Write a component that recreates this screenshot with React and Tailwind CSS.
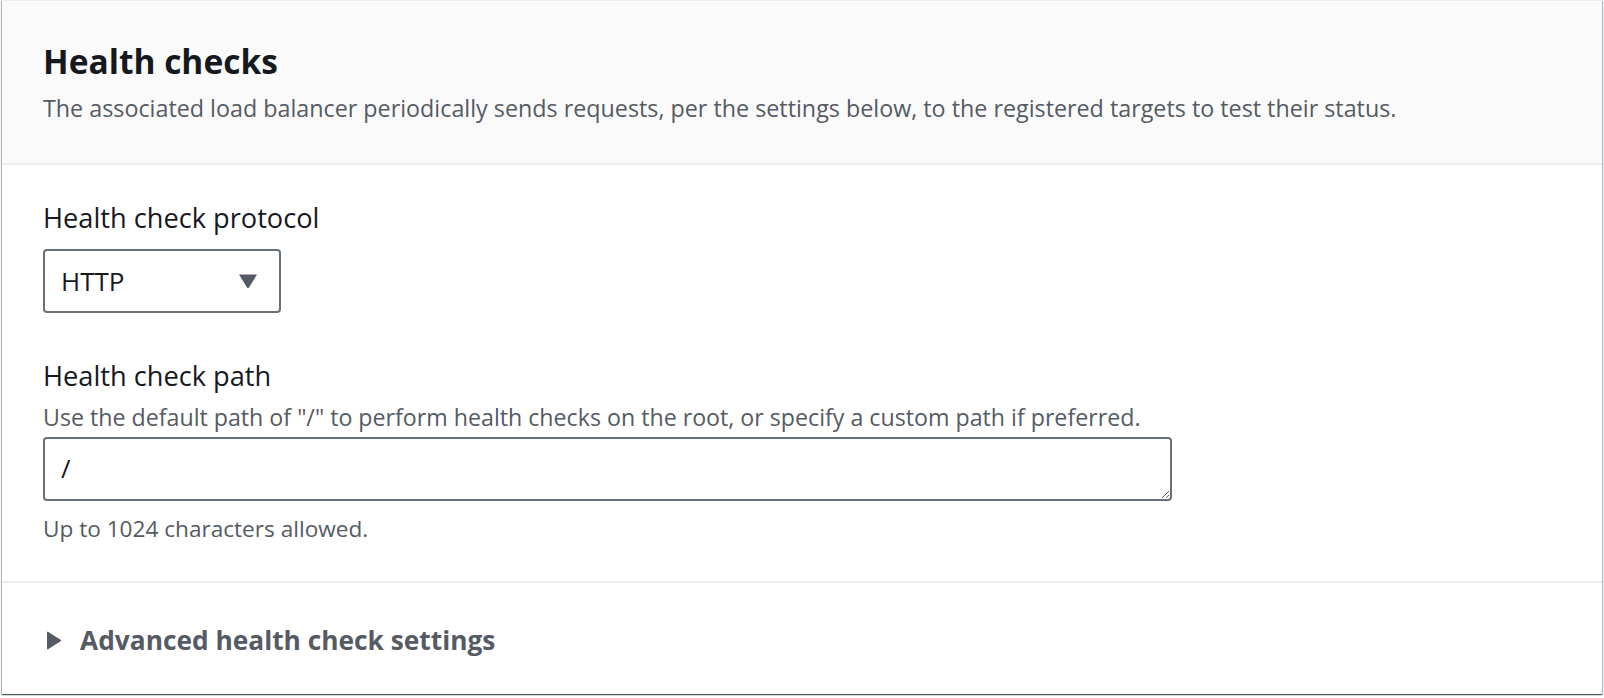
import React from 'react';

function Caret() {
    return (<svg width="20" height="16" viewBox="0 0 20 16" className="shrink-0">
            <path d="M1 1.5 L19 1.5 L11 14.5 Q10 15.5 9 14.5 Z" fill="#545b64"/>
        </svg>);
}

function RightCaret() {
    return (<svg width="16" height="19" viewBox="0 0 16 19" className="shrink-0">
            <path d="M1.5 1 L15 9.5 L1.5 18 Z" fill="#545b64" strokeLinejoin="round" stroke="#545b64" strokeWidth="1"/>
        </svg>);
}

export default function App() {
    const [path, setPath] = React.useState('/');
    return (<div className="min-h-screen bg-white px-[2px] font-['Open_Sans',sans-serif]">
            <div className="bg-white border-t border-[#eaeded] shadow-[0_1px_1px_0_rgba(0,28,36,0.5),1px_1px_1px_0_rgba(0,28,36,0.25),-1px_1px_1px_0_rgba(0,28,36,0.25)]">
                {/* header */}
                <div className="bg-[#fafafa] border-b-2 border-[#eaeded] px-[41px] pt-[40px] pb-[41px]">
                    <h2 className="text-[33.5px] leading-[40px] font-bold text-[#16191f]">Health checks</h2>
                    <p className="mt-[13px] text-[23.3px] leading-[28px] text-[#545b64]">The associated load balancer periodically sends requests, per the settings below, to the registered targets to test their status.</p>
                </div>

                {/* body */}
                <div className="px-[41px] pt-[37px] pb-[39px] border-b-2 border-[#eaeded]">
                    <label className="block text-[27.2px] leading-[32px] text-[#16191f]">Health check protocol</label>
                    <div className="mt-[15px] w-[238px] h-[64px] border-2 border-[#687078] rounded-[4px] flex items-center justify-between pl-[16px] pr-[21px]">
                        <span className="text-[26px] text-[#16191f]">HTTP</span>
                        <Caret />
                    </div>

                    <label className="block mt-[47px] text-[27.2px] leading-[32px] text-[#16191f]">Health check path</label>
                    <p className="mt-[12px] text-[23.2px] leading-[26px] text-[#545b64]">Use the default path of "/" to perform health checks on the root, or specify a custom path if preferred.</p>
                    <textarea value={path} onChange={e => setPath(e.target.value)} rows={1} className="block mt-[7px] w-[1129px] h-[64px] border-2 border-[#687078] rounded-[4px] px-[16px] py-[12px] text-[26px] leading-[34px] text-[#16191f] resize-y outline-none"/>
                    <p className="mt-[15px] text-[22.6px] leading-[26px] text-[#545b64]">Up to 1024 characters allowed.</p>
                </div>

                {/* footer */}
                <div className="px-[41px] pt-[41px] pb-[38px]">
                    <button className="flex items-center gap-[18px] text-[26.3px] leading-[32px] font-bold text-[#545b64] pl-[3px]">
                        <RightCaret />
                        <span>Advanced health check settings</span>
                    </button>
                </div>
            </div>
        </div>);
}
